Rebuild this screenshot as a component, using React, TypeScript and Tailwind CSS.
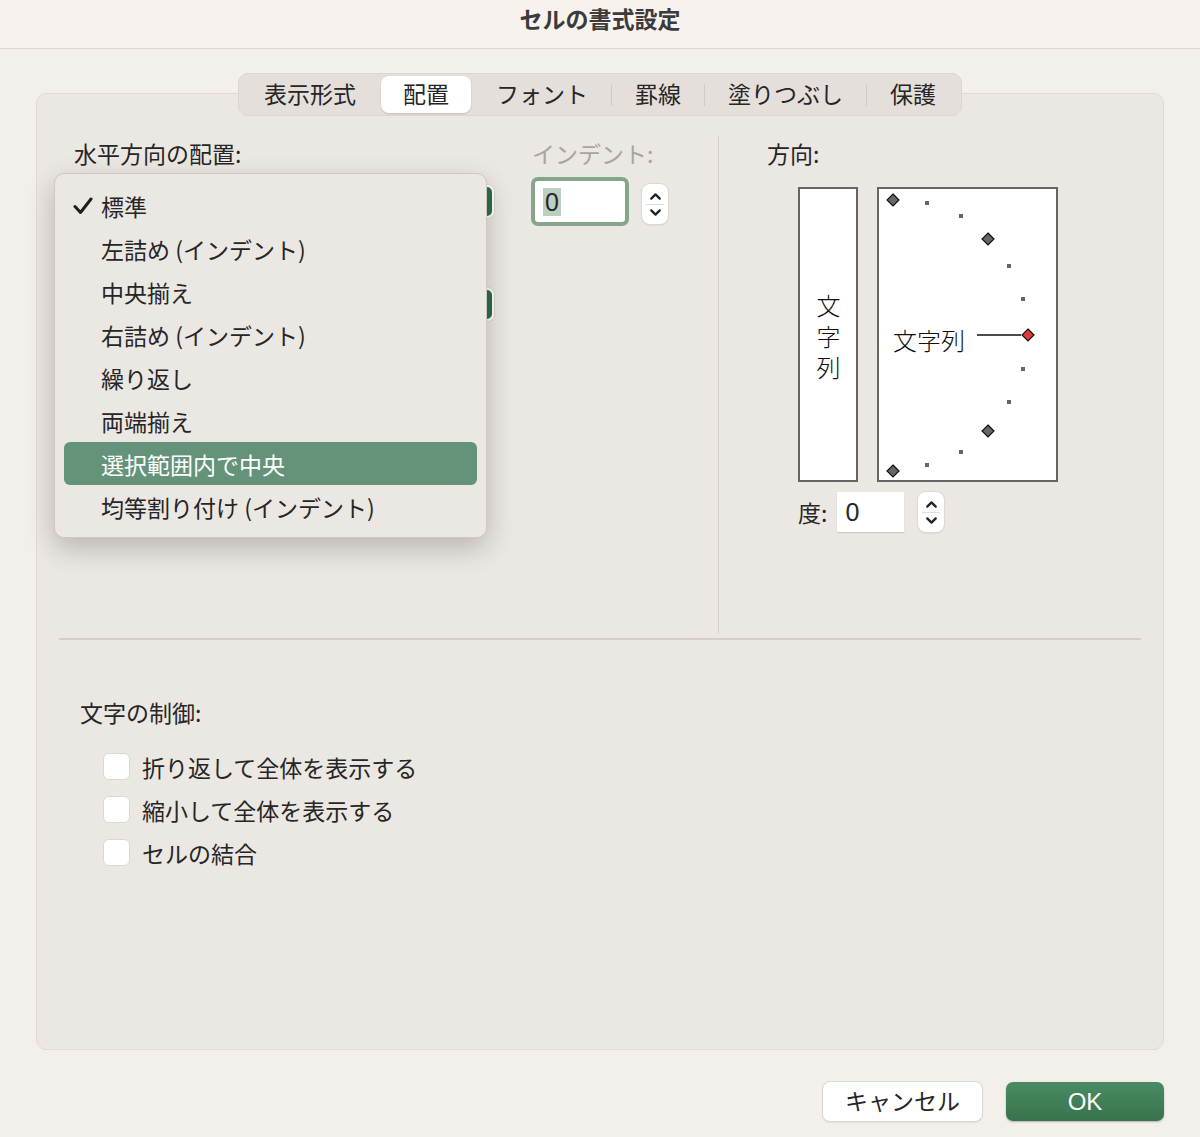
import { ChevronUp, ChevronDown } from 'lucide-react';

const tabs = ['表示形式', '配置', 'フォント', '罫線', '塗りつぶし', '保護'];
const selectedTab = 1;

const menuItems = [
  '標準',
  '左詰め (インデント)',
  '中央揃え',
  '右詰め (インデント)',
  '繰り返し',
  '両端揃え',
  '選択範囲内で中央',
  '均等割り付け (インデント)',
];
const checkedItem = 0;
const hoverItem = 6;

const controls = ['折り返して全体を表示する', '縮小して全体を表示する', 'セルの結合'];

const font = "font-['Noto_Sans_CJK_JP','Noto_Sans',sans-serif]";

const Stepper = () => (
  <div className="w-[26px] h-[40px] rounded-[8px] bg-white shadow-[0_0_0_1px_#ddd8d4,0_1px_2px_rgba(0,0,0,0.15)] flex flex-col items-center justify-center text-[#222]">
    <ChevronUp size={17} strokeWidth={3.2} className="-mb-[1px]" />
    <div className="w-[18px] h-px bg-[#e2ddd9]" />
    <ChevronDown size={17} strokeWidth={3.2} className="-mt-[1px]" />
  </div>
);

const SelectShell = () => (
  <div className="w-[418px] h-[33px] rounded-[7px] bg-white flex justify-end shadow-[0_0_0_1px_#ddd8d4]">
    <div className="w-[22px] h-full rounded-r-[7px] bg-[#2f6e47] border-2 border-white" />
  </div>
);

const Diamond = ({ x, y, fill }: { x: number; y: number; fill: string }) => (
  <polygon
    points={`${x},${y - 6} ${x + 6},${y} ${x},${y + 6} ${x - 6},${y}`}
    fill={fill}
    stroke="#111"
    strokeWidth={1.2}
  />
);

const dots = [
  [48, 14],
  [82, 27],
  [130, 77],
  [144, 110],
  [144, 180],
  [130, 213],
  [82, 263],
  [48, 276],
];

const App = () => {
  return (
    <div className={`w-[1200px] h-[1137px] bg-[#f3efeb] text-[#262626] ${font} flex flex-col`}>
      {/* title bar */}
      <div className="h-[49px] bg-[#f8f2ef] border-b border-[#dcd6d2] flex justify-center pt-[3px]">
        <p className="text-[23px] leading-[30px] font-bold text-[#3b3b3b]">セルの書式設定</p>
      </div>

      {/* panel */}
      <div className="mx-[36px] mt-[44px] h-[957px] rounded-[10px] bg-[#ebe7e3] border border-[#e0dbd7] flex flex-col">
        <div className="flex justify-center -mt-[21px]">
          <div className="flex items-center p-[2px] rounded-[10px] bg-[#e4dfdb] border border-[#dbd6d2]">
            {tabs.map((tab, i) => (
              <div key={tab} className="flex items-center">
                {i > 0 && i !== selectedTab && i - 1 !== selectedTab && (
                  <div className="w-px h-[22px] bg-[#cfcac6]" />
                )}
                <div
                  className={
                    i === selectedTab
                      ? 'h-[37px] px-[22px] mx-[2px] pb-[4px] rounded-[8px] bg-white shadow-[0_1px_2px_rgba(0,0,0,0.15)] flex items-center text-[23px] leading-[30px]'
                      : 'h-[37px] px-[23px] pb-[4px] flex items-center text-[23px] leading-[30px]'
                  }
                >
                  {tab}
                </div>
              </div>
            ))}
          </div>
        </div>

        {/* top section */}
        <div className="flex mt-[20px] h-[497px]">
          <div className="relative w-[682px] border-r border-[#d3cecb] pl-[37px] pt-[2px] flex">
            <div className="w-[458px] flex flex-col">
              <p className="text-[23px] leading-[30px]">水平方向の配置:</p>
              <div className="mt-[17px] ml-[2px]">
                <SelectShell />
              </div>
              <div className="mt-[70px] ml-[2px]">
                <SelectShell />
              </div>
            </div>
            <div className="flex flex-col">
              <p className="text-[23px] leading-[30px] text-[#a8a4a1]">インデント:</p>
              <div className="flex items-start mt-[9px] -ml-px">
                <div className="w-[98px] h-[49px] rounded-[7px] border-[4px] border-[#86a68c] bg-white flex items-center pl-[8px]">
                  <span className="text-[25px] leading-[28px] bg-[#bcd0c2] px-[2px] font-['Liberation_Sans',sans-serif]">0</span>
                </div>
                <div className="ml-[13px] mt-[7px]">
                  <Stepper />
                </div>
              </div>
            </div>

            {/* dropdown popup */}
            <div className="absolute left-[17px] top-[37px] w-[433px] h-[365px] rounded-[10px] bg-[#ebe7e3] border border-[#cdc8c4] shadow-[0_10px_28px_rgba(0,0,0,0.22)] px-[9px] pt-[10px]">
              {menuItems.map((item, i) => (
                <div
                  key={item}
                  className={
                    i === hoverItem
                      ? 'h-[43px] rounded-[6px] bg-[#65937a] text-white flex items-center'
                      : 'h-[43px] flex items-center'
                  }
                >
                  <div className="w-[37px] flex justify-center">
                    {i === checkedItem && (
                      <svg width="20" height="18" viewBox="0 0 20 18">
                        <path d="M2 9.5 L7.5 15.5 L18 2" fill="none" stroke="#1e1e1e" strokeWidth="3" strokeLinecap="round" strokeLinejoin="round" />
                      </svg>
                    )}
                  </div>
                  <span className="text-[23px] leading-[30px]">{item}</span>
                </div>
              ))}
            </div>
          </div>

          <div className="flex-1 pl-[48px] pt-[2px]">
            <p className="text-[23px] leading-[30px]">方向:</p>
            <div className="flex gap-[19px] mt-[19px] ml-[31px]">
              <div className="w-[60px] h-[295px] bg-white border-2 border-[#666] flex items-center justify-center">
                <p className="[writing-mode:vertical-rl] text-[24px] leading-[30px] tracking-[7px] font-light text-[#111] pt-[4px] mt-[8px]">
                  文字列
                </p>
              </div>
              <div className="w-[181px] h-[295px] bg-white border-2 border-[#666]">
                <svg width="177" height="291" viewBox="0 0 177 291">
                  {dots.map(([x, y]) => (
                    <rect key={`${x}-${y}`} x={x - 2} y={y - 2} width="4" height="4" fill="#666" />
                  ))}
                  <Diamond x={14} y={11} fill="#666" />
                  <Diamond x={109} y={50} fill="#666" />
                  <Diamond x={109} y={242} fill="#666" />
                  <Diamond x={14} y={282} fill="#666" />
                  <line x1="98" y1="146" x2="142" y2="146" stroke="#111" strokeWidth="1.5" />
                  <Diamond x={149} y={146} fill="#e03a36" />
                  <text x="14" y="161" fontSize="24" fontWeight="300" fill="#111" fontFamily="Noto Sans CJK JP, sans-serif">
                    文字列
                  </text>
                </svg>
              </div>
            </div>
            <div className="flex items-center mt-[10px] ml-[31px]">
              <span className="text-[23px] leading-[30px]">度:</span>
              <div className="ml-[10px] w-[67px] h-[40px] bg-white shadow-[0_1px_1px_rgba(0,0,0,0.12)] flex items-center pl-[8px]">
                <span className="text-[25px] leading-[28px] font-['Liberation_Sans',sans-serif]">0</span>
              </div>
              <div className="ml-[14px]">
                <Stepper />
              </div>
            </div>
          </div>
        </div>

        {/* bottom section */}
        <div className="mx-[22px] mt-[5px] h-[2px] bg-[#d4cfcb]" />
        <div className="pl-[43px] mt-[57px]">
          <p className="text-[23px] leading-[30px]">文字の制御:</p>
          <div className="flex flex-col mt-[18px] pl-[23px]">
            {controls.map((c) => (
              <div key={c} className="h-[43px] flex items-center gap-[12px]">
                <div className="w-[27px] h-[27px] rounded-[6px] bg-white border border-[#dcd7d3]" />
                <span className="text-[23px] leading-[30px]">{c}</span>
              </div>
            ))}
          </div>
        </div>
      </div>

      {/* buttons */}
      <div className="flex justify-end gap-[24px] mr-[36px] mt-[32px]">
        <button className="w-[159px] h-[39px] pb-[3px] rounded-[7px] bg-white shadow-[0_0_0_1px_#ddd8d4,0_1px_2px_rgba(0,0,0,0.2)] text-[23px] leading-[30px]">
          キャンセル
        </button>
        <button className="w-[158px] h-[39px] rounded-[7px] bg-gradient-to-b from-[#4b8b64] to-[#35744d] text-white text-[24px] leading-[30px] font-['Liberation_Sans',sans-serif] shadow-[0_1px_2px_rgba(0,0,0,0.25)]">
          OK
        </button>
      </div>
    </div>
  );
};

export default App;
